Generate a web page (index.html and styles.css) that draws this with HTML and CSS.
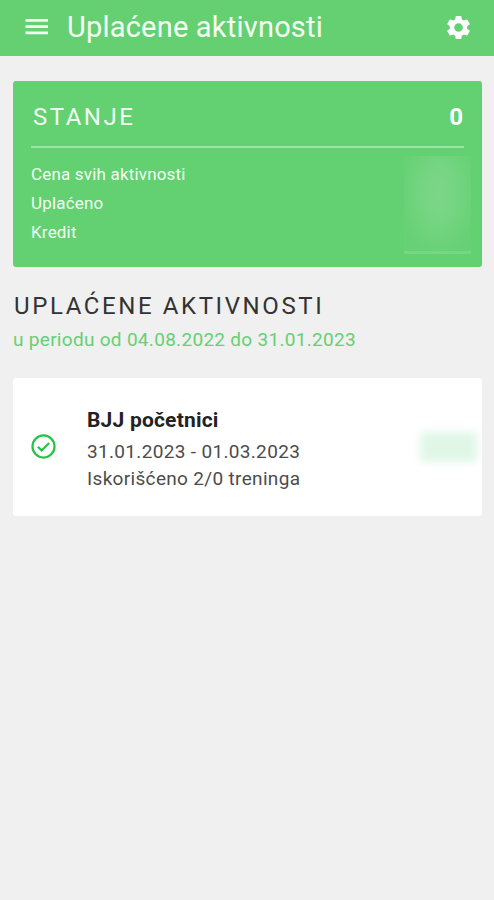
FILE: index.html
```html
<!DOCTYPE html>
<html lang="sr">
<head>
  <meta charset="UTF-8">
  <meta name="viewport" content="width=device-width, initial-scale=1.0">
  <title>Uplaćene aktivnosti</title>
  <link rel="stylesheet" href="styles.css">
</head>
<body>
  <header>
    <svg class="menu" viewBox="0 0 24 16"><path d="M0.5 0h22.5v2.7H0.5zM0.5 6.3h22.5V9H0.5zM0.5 12.5h22.5v2.7H0.5z"/></svg>
    <h1>Uplaćene aktivnosti</h1>
    <svg class="settings" viewBox="0 0 24 24"><path d="M19.14 12.94c.04-.3.06-.61.06-.94 0-.32-.02-.64-.07-.94l2.03-1.58a.49.49 0 0 0 .12-.61l-1.92-3.32a.488.488 0 0 0-.59-.22l-2.39.96c-.5-.38-1.03-.7-1.62-.94l-.36-2.54a.484.484 0 0 0-.48-.41h-3.84c-.24 0-.43.17-.47.41l-.36 2.54c-.59.24-1.13.57-1.62.94l-2.39-.96c-.22-.08-.47 0-.59.22L2.74 8.87c-.12.21-.08.47.12.61l2.03 1.58c-.05.3-.09.63-.09.94s.02.64.07.94l-2.03 1.58a.49.49 0 0 0-.12.61l1.92 3.32c.12.22.37.29.59.22l2.39-.96c.5.38 1.03.7 1.62.94l.36 2.54c.05.24.24.41.48.41h3.84c.24 0 .44-.17.47-.41l.36-2.54c.59-.24 1.13-.56 1.62-.94l2.39.96c.22.08.47 0 .59-.22l1.92-3.32c.12-.22.07-.47-.12-.61l-2.01-1.58zM12 15.6c-1.98 0-3.6-1.62-3.6-3.6s1.62-3.6 3.6-3.6 3.6 1.62 3.6 3.6-1.62 3.6-3.6 3.6z"/></svg>
  </header>

  <main>
    <div class="balance">
      <div class="balance-top">
        <h2>STANJE</h2>
        <span class="total">0</span>
      </div>
      <div class="balance-body">
        <ul>
          <li>Cena svih aktivnosti</li>
          <li>Uplaćeno</li>
          <li>Kredit</li>
        </ul>
        <div class="hidden-amounts"></div>
      </div>
    </div>

    <h2 class="title">UPLAĆENE AKTIVNOSTI</h2>
    <p class="period">u periodu od 04.08.2022 do 31.01.2023</p>

    <div class="activity">
      <svg class="check" viewBox="0 0 24 24"><circle cx="12" cy="12" r="10.6"/><path d="M6.6 12.3l3.6 3.6 7.2-7.3"/></svg>
      <div class="info">
        <h3>BJJ početnici</h3>
        <p>31.01.2023 - 01.03.2023</p>
        <p>Iskorišćeno 2/0 treninga</p>
      </div>
      <div class="hidden-price"></div>
    </div>
  </main>
</body>
</html>
```
FILE: styles.css
```css
body {
  font-family: Roboto, "Liberation Sans", sans-serif;
  background: #f0f0f0;
  margin: 0;
}
h1, h2, h3, p, ul {
  margin: 0;
  padding: 0;
  font-weight: 400;
}
header {
  display: flex;
  align-items: center;
  box-sizing: border-box;
  height: 56px;
  padding: 0 21px 2px 25px;
  background: #64d072;
  color: #f4fff4;
}
h1 {
  flex: 1;
  margin-left: 18px;
  font-size: 29px;
  line-height: 54px;
  letter-spacing: 0.2px;
}
.menu {
  width: 24px;
  height: 16px;
  fill: #effff0;
}
.settings {
  width: 29px;
  height: 29px;
  fill: white;
}
main {
  padding: 25px 12px 0 13px;
}
.balance {
  box-sizing: border-box;
  height: 186px;
  padding: 0 11px 0 18px;
  border-radius: 3px;
  background: #63d071;
  color: #f0fff1;
}
.balance-top {
  display: flex;
  justify-content: space-between;
  align-items: center;
  box-sizing: border-box;
  height: 65px;
  margin-right: 7px;
  padding-top: 6px;
  box-shadow: 0 2px 0 #a0e3a9;
}
.balance h2 {
  padding-left: 2px;
  font-size: 24px;
  letter-spacing: 2.5px;
}
.total {
  padding-right: 1px;
  font-size: 24px;
  font-weight: 700;
  color: white;
}
.balance-body {
  display: flex;
  justify-content: space-between;
}
ul {
  list-style: none;
  padding-top: 14px;
  font-size: 17px;
  line-height: 29px;
  letter-spacing: 0.18px;
}
/* blurred out amounts */
.hidden-amounts {
  box-sizing: border-box;
  width: 67px;
  height: 98px;
  margin-top: 10px;
  border-bottom: 3px solid #76d682;
  background: radial-gradient(ellipse 38px 62px at 52% 40%, #7cd788, #75d581 45%, #67d175);
}
.title {
  margin-top: 25px;
  padding-left: 1px;
  font-size: 24px;
  line-height: 28px;
  letter-spacing: 2.6px;
  color: #333;
}
.period {
  margin-top: 6px;
  font-size: 19px;
  line-height: 28px;
  letter-spacing: 0.3px;
  color: #67cf74;
}
.activity {
  display: flex;
  align-items: center;
  box-sizing: border-box;
  height: 138px;
  margin-top: 24px;
  padding-left: 18px;
  border-radius: 3px;
  background: white;
}
.check {
  width: 25px;
  height: 25px;
  margin-bottom: 2px;
  fill: none;
  stroke: #20c545;
  stroke-width: 2.1;
}
.info {
  flex: 1;
  margin-left: 31px;
  padding-top: 2px;
  color: #4c4c4c;
}
h3 {
  margin-bottom: 2px;
  font-size: 21px;
  line-height: 31px;
  font-weight: 700;
  letter-spacing: 0.2px;
  color: #222;
}
.info p {
  font-size: 19px;
  line-height: 27px;
  letter-spacing: 0.33px;
}
/* blurred out price */
.hidden-price {
  width: 57px;
  height: 30px;
  margin-right: 5px;
  background: #e0f7e8;
  filter: blur(4px);
}
```
